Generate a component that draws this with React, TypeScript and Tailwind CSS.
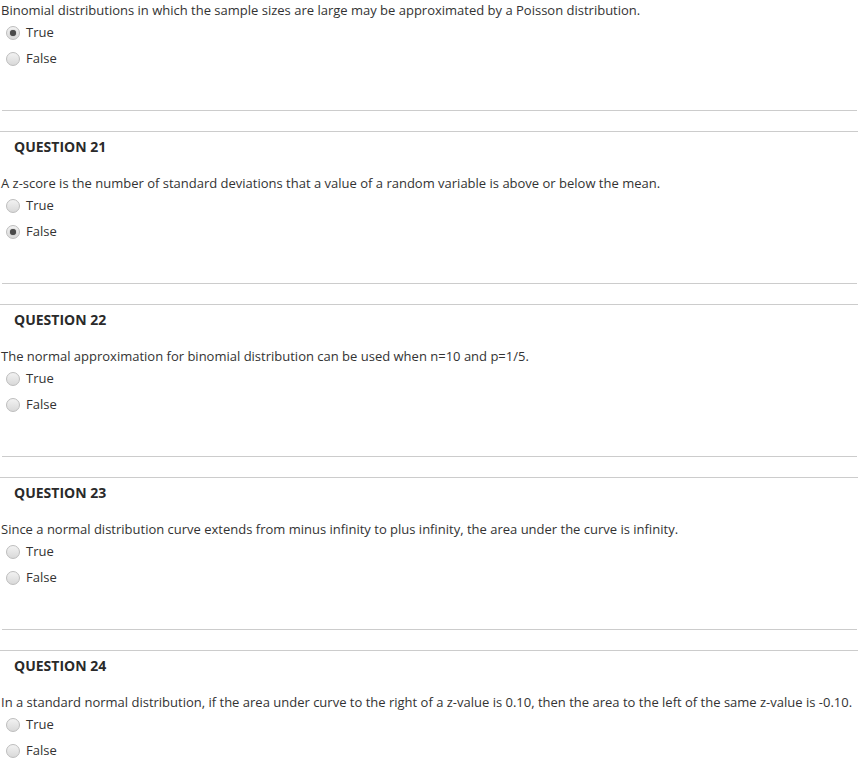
import React from "react";

type Q = { num?: number; text: string; sel: "True" | "False" | null };

const qs: Q[] = [
  { text: "Binomial distributions in which the sample sizes are large may be approximated by a Poisson distribution.", sel: "True" },
  { num: 21, text: "A z-score is the number of standard deviations that a value of a random variable is above or below the mean.", sel: "False" },
  { num: 22, text: "The normal approximation for binomial distribution can be used when n=10 and p=1/5.", sel: null },
  { num: 23, text: "Since a normal distribution curve extends from minus infinity to plus infinity, the area under the curve is infinity.", sel: null },
  { num: 24, text: "In a standard normal distribution, if the area under curve to the right of a z-value is 0.10, then the area to the left of the same z-value is -0.10.", sel: null },
];

function Radio({ checked }: { checked: boolean }) {
  return (
    <span className="relative inline-flex w-[14px] h-[14px] rounded-full border border-[#bdbdbd] bg-gradient-to-b from-[#f2f2f2] to-[#d9d9d9] items-center justify-center">
      {checked && <span className="w-[6px] h-[6px] rounded-full bg-[#4a4a4a] shadow-[0_0_1px_#666]" />}
    </span>
  );
}

function Option({ label, checked }: { label: string; checked: boolean }) {
  return (
    <div className="flex items-center h-[26px]">
      <div className="w-[26px] flex items-center pl-[6px]">
        <Radio checked={checked} />
      </div>
      <span>{label}</span>
    </div>
  );
}

export default function App() {
  return (
    <div
      className="w-[858px] bg-white text-[13px] text-[#333333]"
      style={{ fontFamily: '"Open Sans", "Noto Sans", sans-serif' }}
    >
      {qs.map((q, i) => (
        <div key={i}>
          {q.num !== undefined && (
            <>
              <div className="h-px bg-[#cccccc] ml-[2px] mr-[1px]" />
              <div className="h-[20px]" />
              <div className="h-px bg-[#cccccc]" />
              <div className="pt-[5px] pl-[14px] h-[41px] leading-[20px] text-[14px] font-bold text-[#2a2a2a]">
                QUESTION {q.num}
              </div>
            </>
          )}
          <div className="leading-[20px] pl-[1px] whitespace-nowrap">{q.text}</div>
          <Option label="True" checked={q.sel === "True"} />
          <Option label="False" checked={q.sel === "False"} />
          <div className="h-[38px]" />
        </div>
      ))}
    </div>
  );
}
